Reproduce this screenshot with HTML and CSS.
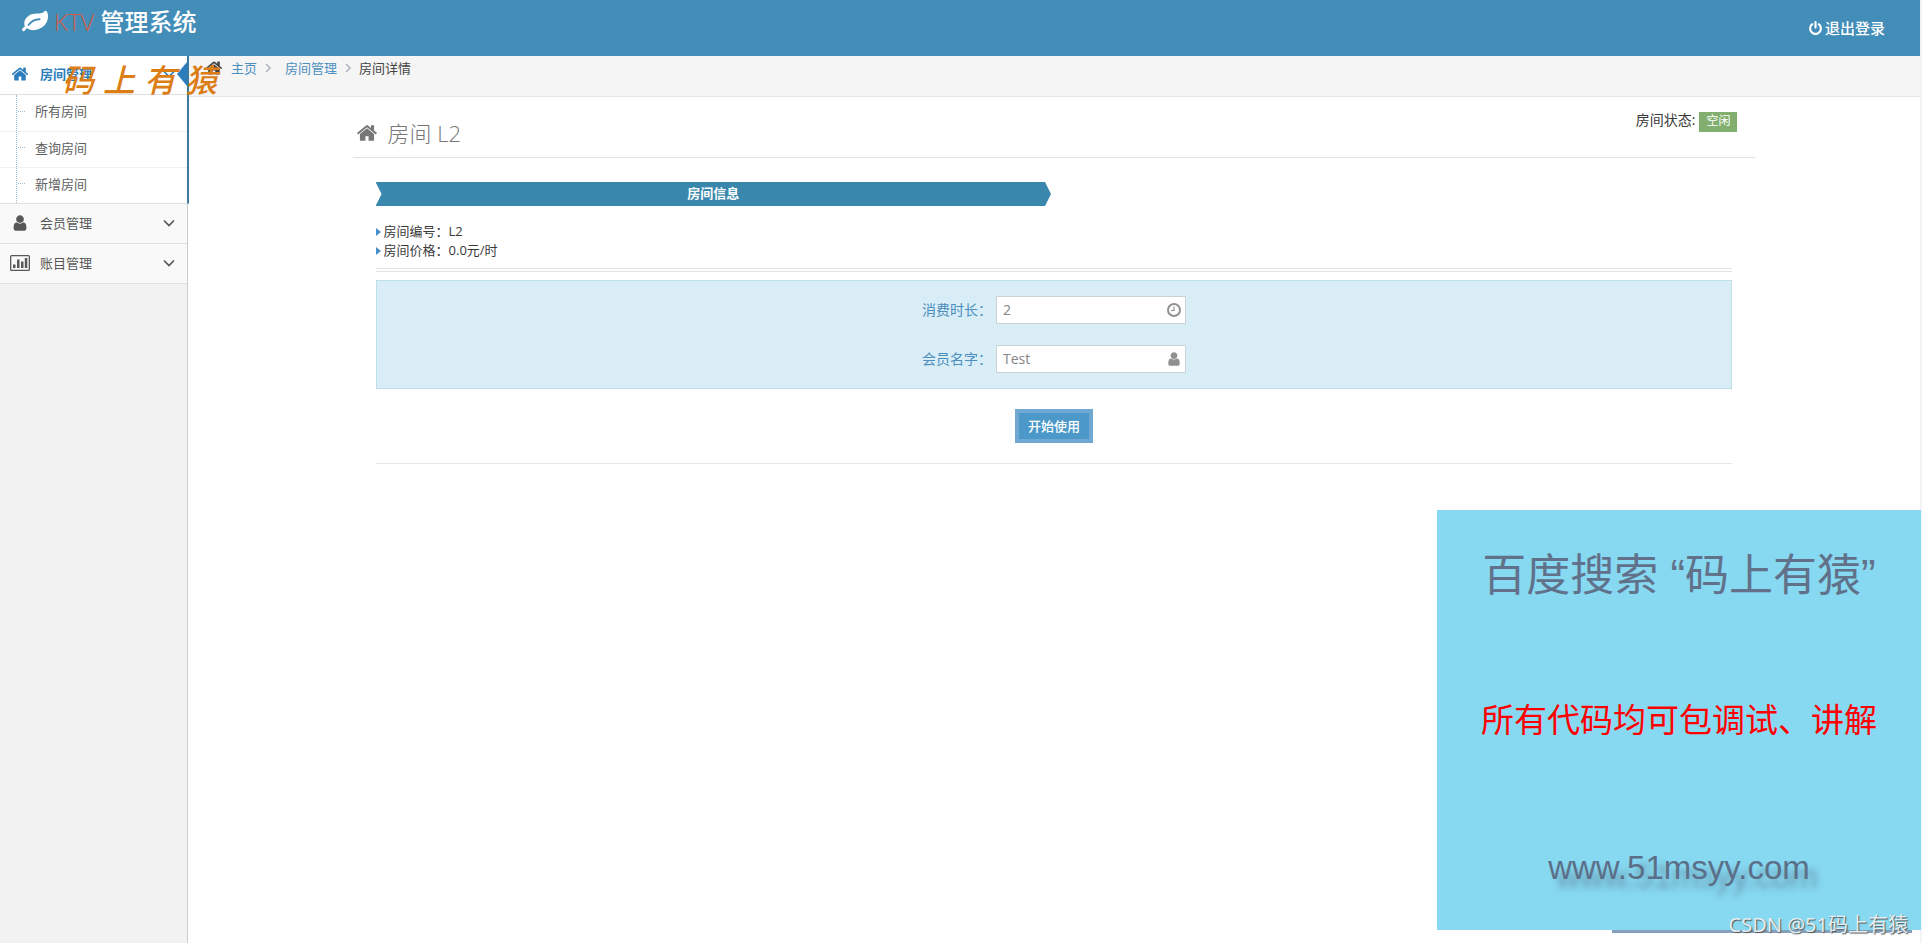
FILE: index.html
```html
<!DOCTYPE html>
<html lang="zh-CN">
<head>
  <meta charset="UTF-8">
  <meta name="viewport" content="width=device-width, initial-scale=1.0">
  <title>KTV 管理系统 - 房间详情</title>
  <link rel="stylesheet" href="styles.css">
</head>
<body>

  <!-- Icon set -->
  <svg class="sprite" aria-hidden="true">
    <symbol id="home" viewBox="0 0 1792 1792"><path d="M1472 992v480q0 26-19 45t-45 19h-384v-384h-256v384h-384q-26 0-45-19t-19-45v-480q0-1 .5-3t.5-3l575-474 575 474q1 2 1 6zm223-69l-62 74q-8 9-21 11h-3q-13 0-21-7l-692-577-692 577q-12 8-24 7-13-2-21-11l-62-74q-8-10-7-23.5t11-21.5l719-599q32-26 76-26t76 26l244 204v-195q0-14 9-23t23-9h192q14 0 23 9t9 23v408l219 182q10 8 11 21.5t-7 23.5z"/></symbol>
    <symbol id="user" viewBox="0 0 1792 1792"><path d="M1536 1399q0 109-62.5 187t-150.5 78h-854q-88 0-150.5-78t-62.5-187q0-85 8.500-160.500t31.500-152 58.500-131 94-89 134.500-34.500q131 128 313 128t313-128q76 0 134.500 34.500t94 89 58.500 131 31.500 152 8.500 160.500zm-256-887q0 159-112.500 271.500t-271.500 112.500-271.500-112.500-112.500-271.500 112.500-271.500 271.500-112.500 271.500 112.500 112.500 271.500z"/></symbol>
    <symbol id="leaf" viewBox="0 0 1792 1792"><path d="M1280 704q0-26-19-45t-45-19q-172 0-318 49.500t-259.500 134-235.500 219.500q-19 21-19 45 0 26 19 45t45 19q24 0 45-19 27-24 74-71t67-66q137-124 268.500-176t313.500-52q26 0 45-19t19-45zm512-198q0 95-20 193-46 224-184.500 383t-357.500 268q-214 108-438 108-148 0-286-47-15-5-88-42t-96-37q-16 0-39.500 32t-45 70-52.500 70-60 32q-43 0-63.500-17.500t-45.500-59.500q-2-4-6-11t-5.500-10-3-9.500-1.500-13.500q0-35 31-73.500t68-65.500 68-56 31-48q0-4-14-38t-16-44q-9-51-9-104 0-115 43.500-220t119-184.500 170.500-139 204-95.500q55-18 145-25.500t179.500-9 178.500-6 163.500-24 113.500-56.500l29.500-29.500 29.500-28 27-20 36.500-16 43.500-4.500q39 0 70.500 46t47.500 112 24 124 8 96z"/></symbol>
    <symbol id="power" viewBox="0 0 1792 1792"><path d="M1664 896q0 156-61 298t-164 245-245 164-298 61-298-61-245-164-164-245-61-298q0-182 80.500-343t226.500-270q43-32 95.500-25t83.500 50q32 42 24.500 94.500t-49.500 84.500q-98 74-151.500 181t-53.500 228q0 104 40.500 198.500t109.500 163.500 163.500 109.500 198.500 40.500 198.500-40.500 163.500-109.500 109.500-163.500 40.500-198.500q0-121-53.500-228t-151.500-181q-42-32-49.500-84.500t24.500-94.500q31-43 84-50t95 25q146 109 226.500 270t80.500 343zm-640-768v640q0 52-38 90t-90 38-90-38-38-90v-640q0-52 38-90t90-38 90 38 38 90z"/></symbol>
    <symbol id="chart" viewBox="0 0 20 16"><path fill-rule="evenodd" d="M1.500 0h17q1.500 0 1.500 1.500v13q0 1.500-1.500 1.500h-17q-1.500 0-1.500-1.500v-13q0-1.500 1.500-1.500zM1.300 1.300v13.400h17.400v-13.400zM3 9.500h2.500v3.500h-2.500zM7 4.500h2.500v8.500h-2.500zM11 6.500h2.500v6.500h-2.500zM14.800 3h2.500v10h-2.500z"/></symbol>
    <symbol id="clock" viewBox="0 0 16 16"><circle cx="8" cy="8" r="6" fill="none" stroke="currentColor" stroke-width="2"/><path d="M8 4.500v4h-3" fill="none" stroke="currentColor" stroke-width="1.200"/></symbol>
    <symbol id="down" viewBox="0 0 12 8"><path d="M1 1.500l5 5 5-5" fill="none" stroke="currentColor" stroke-width="1.700"/></symbol>
    <symbol id="right" viewBox="0 0 6 10"><path d="M1 1l4 4-4 4" fill="none" stroke="currentColor" stroke-width="1.600"/></symbol>
  </svg>

  <header class="navbar">
    <a class="brand" href="#">
      <svg class="icon icon-lg"><use href="#leaf"/></svg>
      <span class="brand-red">KTV</span>
      <span class="brand-name">管理系统</span>
    </a>
    <a class="logout" href="#"><svg class="icon icon-sm"><use href="#power"/></svg>退出登录</a>
  </header>

  <div class="container">
    <nav class="sidebar">
      <div class="menu-group active">
        <a class="menu-item" href="#">
          <svg class="icon"><use href="#home"/></svg><span class="menu-text">房间管理</span>
          <svg class="arrow"><use href="#down"/></svg>
        </a>
        <ul class="submenu">
          <li><a href="#">所有房间</a></li>
          <li><a href="#">查询房间</a></li>
          <li><a href="#">新增房间</a></li>
        </ul>
      </div>
      <a class="menu-item" href="#">
        <svg class="icon"><use href="#user"/></svg><span class="menu-text">会员管理</span>
        <svg class="arrow"><use href="#down"/></svg>
      </a>
      <a class="menu-item" href="#">
        <svg class="icon icon-wide"><use href="#chart"/></svg><span class="menu-text">账目管理</span>
        <svg class="arrow"><use href="#down"/></svg>
      </a>
    </nav>

    <main class="main">
      <div class="breadcrumbs">
        <svg class="icon"><use href="#home"/></svg>
        <a href="#">主页</a>
        <svg class="sep"><use href="#right"/></svg>
        <a class="crumb-wide" href="#">房间管理</a>
        <svg class="sep"><use href="#right"/></svg>
        <span>房间详情</span>
      </div>

      <div class="content">
        <div class="page-header">
          <h1><svg class="icon icon-lg"><use href="#home"/></svg>房间 L2</h1>
          <div class="status">房间状态: <span class="label">空闲</span></div>
        </div>

        <div class="widget">
          <div class="row">
            <h2 class="ribbon">房间信息</h2>
          </div>
          <ul class="info">
            <li>房间编号：L2</li>
            <li>房间价格：0.0元/时</li>
          </ul>
          <div class="double-line"></div>

          <form id="useForm">
            <div class="well">
              <div class="form-group">
                <label for="hours">消费时长：</label>
                <span class="input-icon">
                  <input type="text" id="hours" name="hours" value="2">
                  <svg class="icon"><use href="#clock"/></svg>
                </span>
              </div>
              <div class="form-group">
                <label for="memberName">会员名字：</label>
                <span class="input-icon">
                  <input type="text" id="memberName" name="memberName" value="Test">
                  <svg class="icon"><use href="#user"/></svg>
                </span>
              </div>
            </div>
            <div class="actions">
              <button type="button">开始使用</button>
            </div>
          </form>
        </div>
      </div>
    </main>
  </div>

  <!-- Floating marks -->
  <div class="stamp"><span>码</span><span>上</span><span>有</span><span>猿</span></div>

  <aside class="promo">
    <p class="promo-title">百度搜索 “码上有猿”</p>
    <p class="promo-note">所有代码均可包调试、讲解</p>
    <p class="promo-site">www.51msyy.com</p>
    <div class="promo-bar"></div>
    <p class="credit">CSDN @51码上有猿</p>
  </aside>

</body>
</html>
```

FILE: styles.css
```css
* {
  margin: 0;
  padding: 0;
  box-sizing: border-box;
}

body {
  display: flex;
  flex-direction: column;
  position: relative;
  min-height: 100vh;
  padding-right: 2px;
  font-family: "Open Sans", "Noto Sans CJK SC", sans-serif;
  font-size: 13px;
  line-height: 20px;
  background: #f4f4f4;
  color: #393939;
}

a {
  color: #4c8fbd;
  text-decoration: none;
}

ul {
  list-style: none;
}

.sprite {
  position: absolute;
  width: 0;
  height: 0;
}

.icon {
  flex: none;
  width: 18px;
  height: 18px;
  fill: currentColor;
}

.icon-sm {
  width: 15px;
  height: 15px;
}

.icon-lg {
  width: 26px;
  height: 26px;
}

.icon-wide {
  width: 20px;
}

/* Top bar */
.navbar {
  display: flex;
  justify-content: space-between;
  height: 56px;
  padding: 0 35px 0 22px;
  background: #438eb9;
}

.brand {
  display: flex;
  align-items: center;
  gap: 6px;
  height: 44px;
  font-size: 24px;
  color: #fff;
}

.brand-red {
  font-weight: 300;
  color: #d15b47;
}

.brand-name {
  font-weight: 500;
}

.logout {
  display: flex;
  align-items: center;
  gap: 2px;
  font-size: 15px;
  font-weight: 500;
  color: #fff;
}

.container {
  display: flex;
  flex: 1;
}

/* Sidebar */
.sidebar {
  flex: none;
  width: 188px;
  border-right: 1px solid #ccc;
  background: #f2f2f2;
}

.menu-item {
  display: flex;
  align-items: center;
  gap: 10px;
  height: 40px;
  padding: 0 12px 2px 10px;
  border-bottom: 1px solid #e0e0e0;
  background: #f9f9f9;
  color: #585858;
}

.menu-item .icon {
  width: 20px;
}

.menu-text {
  flex: 1;
}

.arrow {
  width: 12px;
  height: 8px;
}

.active {
  position: relative;
  margin-right: -2px;
  border-right: 2px solid #3a7a9e;
  border-bottom: 1px solid #e0e0e0;
  background: #fff;
}

.active .menu-item {
  height: 39px;
  background: #fff;
  font-weight: bold;
  color: #2b7dbc;
}

.active .menu-item::after {
  content: "";
  position: absolute;
  top: 6px;
  right: 0;
  border: 12px solid transparent;
  border-left-width: 0;
  border-right: 10px solid #2b7dbc;
}

.submenu {
  position: relative;
}

.submenu::before {
  content: "";
  position: absolute;
  top: 0;
  bottom: 0;
  left: 16px;
  border-left: 1px dotted #9dbdd6;
}

.submenu a {
  display: flex;
  align-items: center;
  gap: 10px;
  height: 36px;
  padding: 0 0 4px 18px;
  border-top: 1px dotted #e4e4e4;
  color: #616161;
}

.submenu li:first-child a {
  border-top: 0;
}

.submenu a::before {
  content: "";
  width: 7px;
  border-top: 1px dotted #9dbdd6;
}

/* Main area */
.main {
  flex: 1;
  min-width: 0;
  background: #fff;
}

.breadcrumbs {
  display: flex;
  align-items: center;
  gap: 8px;
  height: 41px;
  padding: 0 17px 16px;
  border-bottom: 1px solid #e5e5e5;
  background: #f5f5f5;
  color: #444;
}

.crumb-wide {
  margin-left: 6px;
}

.sep {
  width: 6px;
  height: 10px;
  color: #b2b6bf;
}

.content {
  width: 81%;
  margin: 0 auto;
}

.page-header {
  display: flex;
  justify-content: space-between;
  height: 61px;
  padding: 13px 18px 0 3px;
  border-bottom: 1px solid #e2e2e2;
}

.page-header h1 {
  display: flex;
  align-items: center;
  gap: 10px;
  height: 46px;
  font-size: 22px;
  font-weight: 300;
  color: #777;
}

.page-header .icon {
  width: 22px;
  height: 22px;
}

.status {
  display: flex;
  gap: 4px;
  font-size: 14px;
}

.label {
  height: 20px;
  margin-top: 2px;
  padding: 0 7px;
  background: #82af6f;
  font-size: 12px;
  line-height: 18px;
  color: #fff;
}

.widget {
  padding: 24px 23px 0;
}

.row {
  display: grid;
  grid-template-columns: 1fr 1fr;
  gap: 6px;
}

.ribbon {
  height: 24px;
  background: #3a87ad;
  clip-path: polygon(0 0, calc(100% - 6px) 0, 100% 50%, calc(100% - 6px) 100%, 0 100%, 6px 50%);
  font-size: 13px;
  line-height: 22px;
  text-align: center;
  color: #fff;
}

.info {
  padding: 16px 0 8px;
}

.info li {
  display: flex;
  align-items: center;
  gap: 3px;
  line-height: 19px;
}

.info li::before {
  content: "";
  border: 4px solid transparent;
  border-left: 5px solid #478fca;
  border-right-width: 0;
}

.double-line {
  height: 4px;
  border: 1px solid #e2e2e2;
  border-width: 1px 0;
}

.well {
  display: flex;
  flex-direction: column;
  align-items: center;
  gap: 21px;
  margin-top: 8px;
  padding: 15px;
  border: 1px solid #bcdfe8;
  background: #d9edf7;
}

.form-group {
  display: flex;
  align-items: center;
  gap: 4px;
}

.form-group label {
  font-size: 14px;
  color: #4c8fbd;
}

.input-icon {
  position: relative;
}

.input-icon input {
  display: block;
  width: 190px;
  height: 28px;
  padding: 0 24px 2px 6px;
  border: 1px solid #c9d3d8;
  background: #fff;
  font-family: inherit;
  font-size: 14px;
  color: #858585;
}

.input-icon .icon {
  position: absolute;
  top: 6px;
  right: 4px;
  width: 16px;
  height: 16px;
  color: #909090;
}

.actions {
  display: flex;
  justify-content: center;
  padding: 20px 0;
  border-bottom: 1px solid #e8e8e8;
}

.actions button {
  height: 34px;
  padding: 0 9px 2px;
  border: 4px solid #6fa9d3;
  background: #4b98c9;
  font-family: inherit;
  font-size: 13px;
  font-weight: 500;
  color: #fff;
  cursor: pointer;
}

/* Floating marks */
.stamp {
  display: flex;
  gap: 9px;
  position: absolute;
  top: 62px;
  left: 62px;
  font-size: 32px;
  font-style: italic;
  font-weight: 500;
  line-height: 36px;
  color: #dd7d16;
}

.promo {
  position: absolute;
  right: 1px;
  bottom: 13px;
  width: 484px;
  height: 420px;
  padding-top: 34px;
  background: #87d8f1;
  text-align: center;
}

.promo-title {
  font-family: "Liberation Sans", "Noto Sans CJK SC", sans-serif;
  font-size: 44px;
  line-height: 64px;
  color: #61718a;
}

.promo-note {
  margin-top: 80px;
  font-size: 33px;
  line-height: 64px;
  color: #f00;
}

.promo-site {
  margin-top: 84px;
  font-family: "Liberation Sans", Arial, sans-serif;
  font-size: 33px;
  line-height: 64px;
  color: #5b7088;
  text-shadow: 8px 9px 6px rgba(70, 90, 110, 0.5);
}

.promo-bar {
  position: absolute;
  top: 100%;
  right: 9px;
  width: 300px;
  height: 3px;
  background: #85a0bb;
}

.credit {
  position: absolute;
  right: 13px;
  bottom: -7px;
  font-family: "Noto Sans", "Noto Sans CJK SC", sans-serif;
  font-size: 20px;
  line-height: 24px;
  color: #e4eef2;
  text-shadow: 1px 1px 1px #555;
}
```
